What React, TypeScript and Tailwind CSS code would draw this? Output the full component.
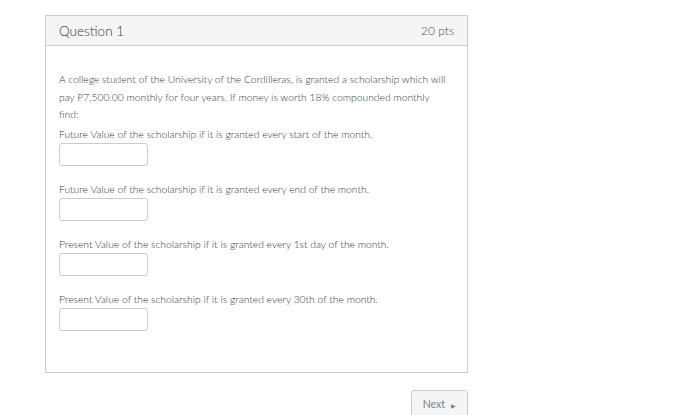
const parts = [
  "Future Value of the scholarship if it is granted every start of the month.",
  "Future Value of the scholarship if it is granted every end of the month.",
  "Present Value of the scholarship if it is granted every 1st day of the month.",
  "Present Value of the scholarship if it is granted every 30th of the month.",
];

export default function App() {
  return (
    <div className="min-h-[415px] bg-white font-['Lato',sans-serif] text-[#2d3b45] overflow-hidden">
      <div className="ml-[45px] pt-[15px] w-[423px]">
        <div className="border border-[#c7cdd1]">
          <div className="h-[30px] flex items-center justify-between px-[13px] pt-[1px] bg-[#f5f5f5] border-b border-[#c7cdd1]">
            <span className="text-[13.5px] font-light text-[#2d3b45]">Question 1</span>
            <span className="text-[12px] font-light text-[#4a5358]">20 pts</span>
          </div>
          <div className="px-[13px] pt-[25px] pb-[41px] text-[10.3px] leading-[17.5px] font-light text-[#30383e]">
            <p className="pr-[4px]">
              A college student of the University of the Cordilleras, is granted a scholarship which will pay P7,500.00
              monthly for four years. If money is worth 18% compounded monthly find:
            </p>
            <div className="flex flex-col gap-[14.5px] mt-[2px]">
              {parts.map((t) => (
                <div key={t}>
                  <p>{t}</p>
                  <div className="w-[89px] h-[23px] border border-[#c7cdd1] rounded-[3px] bg-white" />
                </div>
              ))}
            </div>
          </div>
        </div>
        <div className="flex justify-end mt-[17px]">
          <button className="h-[30px] px-[11px] flex items-center gap-[6px] text-[10.5px] text-[#7a848b] bg-[#f5f5f5] border border-[#c7cdd1] rounded-[3px]">
            Next
            <span className="text-[6px]">▶</span>
          </button>
        </div>
      </div>
    </div>
  );
}
